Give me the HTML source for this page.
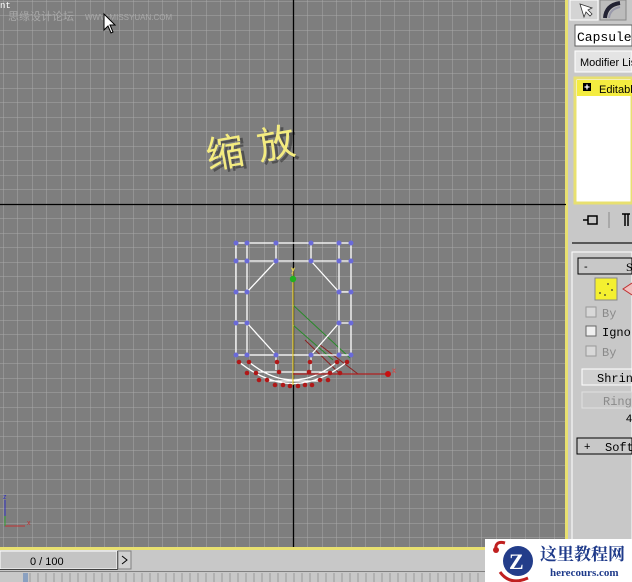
<!DOCTYPE html>
<html><head><meta charset="utf-8"><style>
html,body{margin:0;padding:0;width:632px;height:582px;overflow:hidden;background:#c8c8c8}
svg{display:block;font-family:"Liberation Sans","Noto Sans CJK SC",sans-serif}
</style></head><body>
<svg width="632" height="582" viewBox="0 0 632 582" xmlns="http://www.w3.org/2000/svg">
<defs>
<pattern id="g" x="293" y="204" width="14.5" height="14.5" patternUnits="userSpaceOnUse">
<rect width="14.5" height="14.5" fill="#7e7e7e"/>
<path d="M0 0V14.5M0 0H14.5" stroke="#a8a8a8" stroke-width="1"/>
</pattern>
</defs>
<rect x="0" y="0" width="566" height="548" fill="url(#g)"/>
<rect x="565" y="0" width="3" height="551" fill="#e8e070"/>
<rect x="0" y="547" width="568" height="3" fill="#e8e070"/>
<line x1="293.5" y1="0" x2="293.5" y2="547" stroke="#000" stroke-width="1.3"/>
<line x1="0" y1="204.5" x2="566" y2="204.5" stroke="#000" stroke-width="1.3"/>
<text x="0" y="8" font-size="9" fill="#fff" font-family="Liberation Mono">nt</text>
<text x="8" y="20" font-size="11" fill="#a8a8a8" font-family="Noto Sans CJK SC">思缘设计论坛</text>
<text x="85" y="20" font-size="8" fill="#a8a8a8">WWW.MISSYUAN.COM</text>
<path d="M104 14 L104 30 L108 26 L111 33 L113 32 L110 25 L115 25 Z" fill="#fff" stroke="#000" stroke-width="1"/>
<text x="208" y="163" font-size="38" fill="#000" opacity="0.35" transform="rotate(-10 260 145)" letter-spacing="14" font-family="Noto Sans CJK SC">缩放</text>
<text x="205" y="160" font-size="38" fill="#f4ec80" transform="rotate(-10 260 145)" letter-spacing="14" font-family="Noto Sans CJK SC">缩放</text>
<path d="M293 305 L350 358 M293 325 L333 360" stroke="#2a8a2a" stroke-width="1"/>
<path d="M320 345 L358 374 M305 340 L340 374" stroke="#8a2020" stroke-width="1"/>
<g stroke="#fff" stroke-width="1.3" fill="none">
<rect x="236" y="243" width="115" height="112"/>
<path d="M247 243V355M339 243V355M236 261H351M276 243V261M311 243V261"/>
<path d="M276 261L247 292M311 261L339 292M247 323L276 355M339 323L311 355"/>
<path d="M236 292H247M339 292H351M236 323H247M339 323H351"/>
<path d="M239 362Q293 405 347 362M249 362Q293 398 337 362M256 372H331M265 381H322M276 355V370M311 355V370"/>
</g>
<g fill="#6a6ad8">
<circle cx="236" cy="243" r="2.5"/><circle cx="247" cy="243" r="2.5"/><circle cx="276" cy="243" r="2.5"/><circle cx="311" cy="243" r="2.5"/><circle cx="339" cy="243" r="2.5"/><circle cx="351" cy="243" r="2.5"/>
<circle cx="236" cy="261" r="2.5"/><circle cx="247" cy="261" r="2.5"/><circle cx="276" cy="261" r="2.5"/><circle cx="311" cy="261" r="2.5"/><circle cx="339" cy="261" r="2.5"/><circle cx="351" cy="261" r="2.5"/>
<circle cx="236" cy="292" r="2.5"/><circle cx="247" cy="292" r="2.5"/><circle cx="339" cy="292" r="2.5"/><circle cx="351" cy="292" r="2.5"/>
<circle cx="236" cy="323" r="2.5"/><circle cx="247" cy="323" r="2.5"/><circle cx="339" cy="323" r="2.5"/><circle cx="351" cy="323" r="2.5"/>
<circle cx="236" cy="355" r="2.5"/><circle cx="247" cy="355" r="2.5"/><circle cx="276" cy="355" r="2.5"/><circle cx="311" cy="355" r="2.5"/><circle cx="339" cy="355" r="2.5"/><circle cx="351" cy="355" r="2.5"/>
</g>
<line x1="293" y1="279" x2="293" y2="385" stroke="#e8d040" stroke-width="1.3"/>
<line x1="293" y1="268" x2="293" y2="279" stroke="#e8d040" stroke-width="1"/>
<line x1="293" y1="374" x2="388" y2="374" stroke="#b02020" stroke-width="1.3"/>
<circle cx="388" cy="374" r="3" fill="#c81010"/>
<text x="392" y="373" font-size="8" fill="#e04040">x</text>
<text x="291" y="272" font-size="8" fill="#f0e060">y</text>
<circle cx="293" cy="279" r="3.2" fill="#20b020"/>
<g fill="#b01818">
<circle cx="239" cy="362" r="2.3"/><circle cx="249" cy="362" r="2.3"/><circle cx="277" cy="362" r="2.3"/><circle cx="310" cy="362" r="2.3"/><circle cx="337" cy="362" r="2.3"/><circle cx="347" cy="362" r="2.3"/>
<circle cx="247" cy="373" r="2.3"/><circle cx="256" cy="373" r="2.3"/><circle cx="279" cy="372" r="2.3"/><circle cx="309" cy="372" r="2.3"/><circle cx="330" cy="373" r="2.3"/><circle cx="340" cy="373" r="2.3"/>
<circle cx="259" cy="380" r="2.3"/><circle cx="267" cy="380" r="2.3"/><circle cx="320" cy="380" r="2.3"/><circle cx="328" cy="380" r="2.3"/>
<circle cx="275" cy="385" r="2.3"/><circle cx="283" cy="385" r="2.3"/><circle cx="290" cy="386" r="2.3"/><circle cx="298" cy="386" r="2.3"/><circle cx="305" cy="385" r="2.3"/><circle cx="312" cy="385" r="2.3"/>
</g>
<path d="M5 500V526H25" stroke="#3030c0" stroke-width="1" fill="none"/>
<line x1="5" y1="526" x2="25" y2="526" stroke="#c03030"/>
<line x1="5" y1="516" x2="5" y2="526" stroke="#30a030"/>
<text x="3" y="499" font-size="7" fill="#3030c0">z</text>
<text x="27" y="525" font-size="7" fill="#c03030">x</text>
<rect x="0" y="550" width="568" height="21" fill="#c8c8c8"/>
<rect x="0" y="551" width="117" height="18" fill="#c4c4c4" stroke="#fff" stroke-width="1"/>
<line x1="0" y1="569.5" x2="117" y2="569.5" stroke="#404040"/>
<line x1="117.5" y1="551" x2="117.5" y2="570" stroke="#404040"/>
<text x="30" y="565" font-size="11" fill="#000">0 / 100</text>
<rect x="118" y="551" width="13" height="18" fill="#d0d0d0" stroke="#808080"/>
<path d="M122 556L127 560L122 564" stroke="#000" fill="none"/>
<rect x="0" y="571" width="568" height="11" fill="#c8c8c8"/>
<line x1="0" y1="571.5" x2="568" y2="571.5" stroke="#808080"/>
<g stroke="#9a9a9a" stroke-width="1">
<path d="M30 573V582M38 573V582M46 573V582M54 573V582M62 573V582M70 573V582M78 573V582M86 573V582M94 573V582M102 573V582M110 573V582M118 573V582M126 573V582M134 573V582M142 573V582M150 573V582M158 573V582M166 573V582M174 573V582M182 573V582M190 573V582M198 573V582M206 573V582M214 573V582M222 573V582M230 573V582M238 573V582M246 573V582M254 573V582M262 573V582M270 573V582M278 573V582M286 573V582M294 573V582M302 573V582M310 573V582M318 573V582M326 573V582M334 573V582M342 573V582M350 573V582M358 573V582M366 573V582M374 573V582M382 573V582M390 573V582M398 573V582M406 573V582M414 573V582M422 573V582M430 573V582M438 573V582M446 573V582M454 573V582M462 573V582M470 573V582M478 573V582"/>
</g>
<rect x="23" y="573" width="5" height="9" fill="#8aa0c0"/>
<rect x="568" y="0" width="64" height="550" fill="#c8c8c8"/>
<rect x="570" y="0" width="28" height="20" fill="#d4d4d4" stroke="#fff"/>
<path d="M580 4L584 17L586 12L590 16L592 14L588 10L592 8Z" fill="#fff" stroke="#333" stroke-width="0.8"/>
<rect x="600" y="0" width="26" height="20" fill="#bcbcbc" stroke="#888"/>
<path d="M605 18Q606 5 620 3" stroke="#223" stroke-width="4" fill="none"/>
<path d="M609 18Q610 9 620 7" stroke="#99a" stroke-width="2" fill="none"/>
<rect x="575" y="25" width="57" height="21" fill="#fff" stroke="#606060"/>
<text x="577" y="41" font-size="13" fill="#000" font-family="Liberation Mono">CapsuleC</text>
<rect x="575" y="51" width="57" height="21" fill="#e4e4e4" stroke="#ffffff"/>
<text x="580" y="66" font-size="11" fill="#000">Modifier Lis</text>
<rect x="575" y="78" width="57" height="125" fill="#fff" stroke="#e8e070" stroke-width="3"/>
<rect x="577" y="80" width="55" height="16" fill="#f4ec40"/>
<rect x="583" y="83" width="8" height="8" fill="#000"/>
<path d="M587 84.5V89.5M584.5 87H589.5" stroke="#fff" stroke-width="1.3"/>
<text x="599" y="93" font-size="11" fill="#000">Editabl</text>
<path d="M583 220H588M588 216H597V224H588Z" stroke="#000" fill="none" stroke-width="1.5"/>
<line x1="609" y1="212" x2="609" y2="228" stroke="#888"/>
<path d="M622 214H630M625 214V226M628 214V226" stroke="#000" stroke-width="1.5"/>
<line x1="572" y1="243" x2="632" y2="243" stroke="#333" stroke-width="1.5"/>
<rect x="572" y="252" width="60" height="290" fill="none" stroke="#fff"/>
<rect x="578" y="258" width="54" height="16" fill="#c8c8c8" stroke="#000"/>
<text x="584" y="270" font-size="11" fill="#000">-</text>
<text x="626" y="271" font-size="12" fill="#000" font-family="Liberation Serif">S</text>
<rect x="595" y="278" width="22" height="22" fill="#f4f030" stroke="#888"/>
<circle cx="600" cy="293" r="0.9" fill="#333"/><circle cx="605" cy="295" r="0.9" fill="#333"/><circle cx="608" cy="284" r="0.9" fill="#333"/><circle cx="612" cy="290" r="0.9" fill="#333"/>
<path d="M632 283L623 289L632 295" stroke="#c03030" fill="#f0c0c0"/>
<rect x="586" y="307" width="10" height="10" fill="#d8d8d8" stroke="#999"/>
<text x="602" y="317" font-size="12" fill="#8a8a8a" font-family="Liberation Mono">By</text>
<rect x="586" y="326" width="10" height="10" fill="#f0f0f0" stroke="#666"/>
<text x="602" y="336" font-size="12" fill="#000" font-family="Liberation Mono">Igno</text>
<rect x="586" y="346" width="10" height="10" fill="#d8d8d8" stroke="#999"/>
<text x="602" y="356" font-size="12" fill="#8a8a8a" font-family="Liberation Mono">By</text>
<rect x="582" y="369" width="50" height="16" fill="#d0d0d0" stroke="#fff"/>
<text x="597" y="382" font-size="12" fill="#000" font-family="Liberation Mono">Shrin</text>
<rect x="582" y="392" width="50" height="16" fill="#c8c8c8" stroke="#e0e0e0"/>
<text x="603" y="405" font-size="12" fill="#8a8a8a" font-family="Liberation Mono">Ring</text>
<text x="626" y="422" font-size="11" fill="#000">4</text>
<rect x="577" y="438" width="55" height="16" fill="#c8c8c8" stroke="#000"/>
<text x="584" y="450" font-size="11" fill="#000">+</text>
<text x="605" y="451" font-size="12" fill="#000" font-family="Liberation Mono">Soft</text>
<rect x="485" y="539" width="147" height="43" fill="#fff"/>
<circle cx="518" cy="561" r="15" fill="#233d8a"/>
<path d="M496 552Q494 540 505 543M500 572Q510 586 528 578" stroke="#c02020" stroke-width="3" fill="none"/>
<circle cx="496" cy="550" r="3" fill="#c02020"/>
<text x="509" y="569" font-size="22" font-weight="bold" fill="#fff" font-family="Liberation Serif">Z</text>
<text x="540" y="560" font-size="17" font-weight="bold" fill="#1e3a8a" font-family="Noto Serif CJK SC">这里教程网</text>
<text x="550" y="576" font-size="11" font-weight="bold" fill="#1e3a8a" font-family="Liberation Serif">herecours.com</text>
</svg>
</body></html>
